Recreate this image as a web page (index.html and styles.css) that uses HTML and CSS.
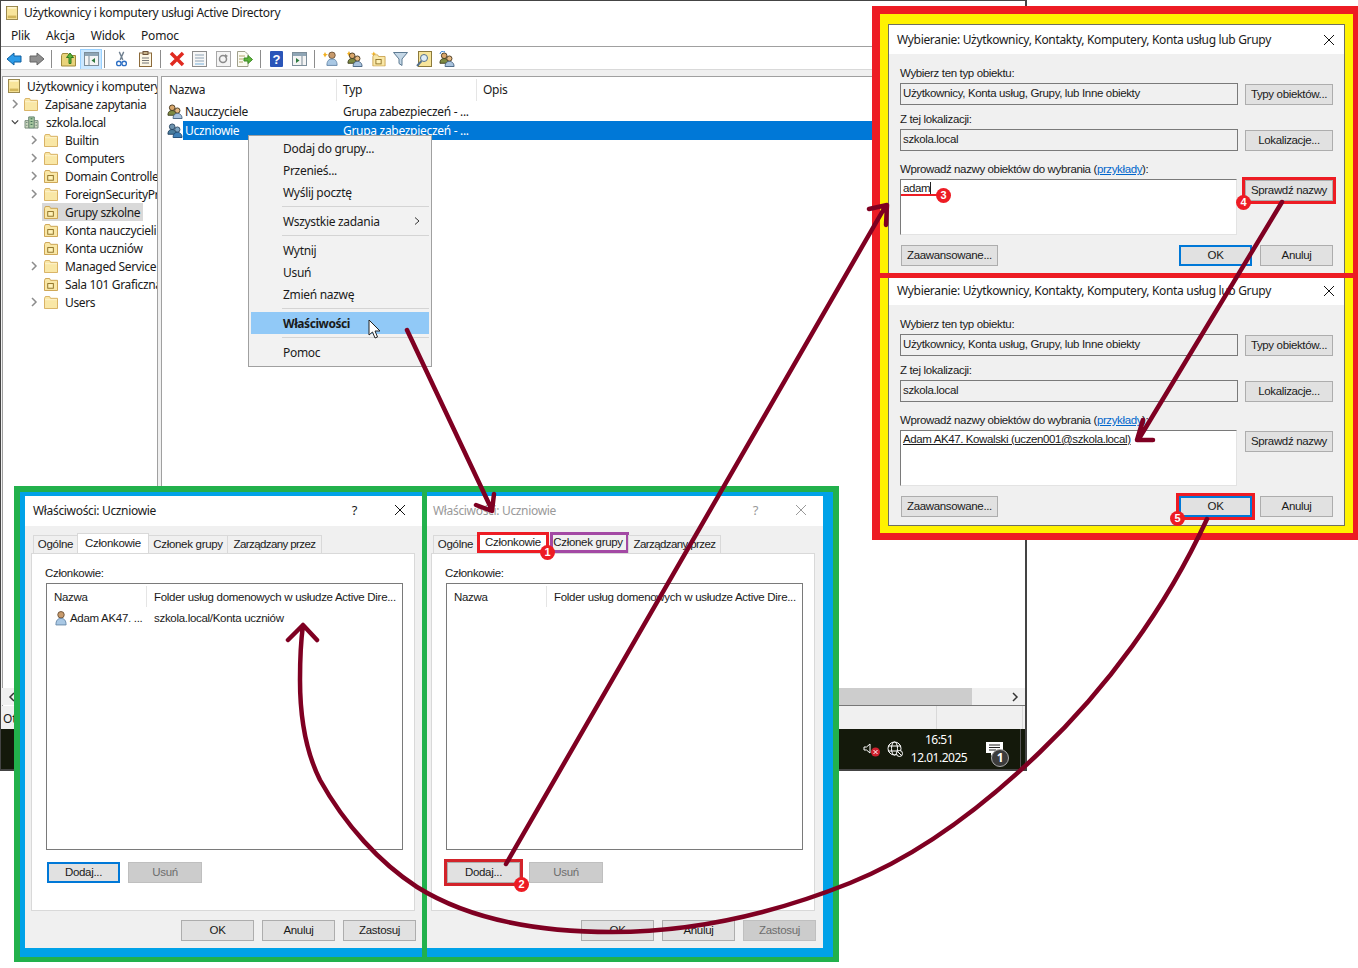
FILE: index.html
```html
<!DOCTYPE html>
<html>
<head>
<meta charset="utf-8">
<title>Użytkownicy i komputery usługi Active Directory</title>
<link rel="stylesheet" href="styles.css">
</head>
<body>
<svg class="defs" width="0" height="0">
	<symbol id="i-folder" viewBox="0 0 15 14">
		<path d="M.5 2.5V13.5H14.5V2.5H7L6 .5H1.5Z" fill="#f9e7a6" stroke="#d6ad5c"/>
		<path d="M1 4H14" stroke="#fdf3cf"/>
	</symbol>
	<symbol id="i-ou" viewBox="0 0 15 14">
		<path d="M.5 2.5V13.5H14.5V2.5H7L6 .5H1.5Z" fill="#f9e7a6" stroke="#c99f4b"/>
		<rect x="4" y="6" width="6" height="5" fill="#fff2b8" stroke="#8a6d22"/>
	</symbol>
	<symbol id="i-root" viewBox="0 0 14 16">
		<rect x=".5" y=".5" width="13" height="15" fill="#f8e59b" stroke="#8c7a3c"/>
		<rect x="2" y="11" width="10" height="3" fill="#d2b65a"/>
		<path d="M2 2H12" stroke="#fff6cf" stroke-width="2"/>
	</symbol>
	<symbol id="i-domain" viewBox="0 0 16 14">
		<path d="M5 1H11V13H5Z" fill="#a8c9a0" stroke="#5f7d6d"/>
		<path d="M1 5H5V13H1ZM11 5H15V13H11Z" fill="#cfd8c2" stroke="#6f8574"/>
		<path d="M7 3H9M7 6H9M7 9H9M2.500 7H3.500M2.500 10H3.500M12.500 7H13.500M12.500 10H13.500" stroke="#2f5f49"/>
	</symbol>
	<symbol id="i-group" viewBox="0 0 17 16">
		<circle cx="5.500" cy="4" r="3" fill="#d9a76c" stroke="#4a3a20"/>
		<path d="M1 12C1 8 3 7 5.500 7S10 8 10 12Z" fill="#7d8a42" stroke="#3f3f1f"/>
		<circle cx="11" cy="7" r="2.800" fill="#e5b982" stroke="#4a3a20"/>
		<path d="M6.500 15.500C6.500 11.500 8.500 10 11 10S16 11.500 16 15.500Z" fill="#a9c3de" stroke="#45617f"/>
	</symbol>
	<symbol id="i-groupsel" viewBox="0 0 17 16">
		<circle cx="5.500" cy="4" r="3" fill="#6d92ad" stroke="#2f4c66"/>
		<path d="M1 12C1 8 3 7 5.500 7S10 8 10 12Z" fill="#4a7d9e" stroke="#1f3f5f"/>
		<circle cx="11" cy="7" r="2.800" fill="#7ea6c4" stroke="#2f4c66"/>
		<path d="M6.500 15.500C6.500 11.500 8.500 10 11 10S16 11.500 16 15.500Z" fill="#3f7fb5" stroke="#1c4a75"/>
	</symbol>
	<symbol id="i-user" viewBox="0 0 13 16">
		<circle cx="6.500" cy="4.500" r="3.500" fill="#c79a6c" stroke="#6d5238"/>
		<path d="M1 15.500C1 10.500 3 8.500 6.500 8.500S12 10.500 12 15.500Z" fill="#a9c8e4" stroke="#6688a8"/>
	</symbol>
	<symbol id="i-chev" viewBox="0 0 8 10">
		<path d="M2 1L6 5L2 9" fill="none" stroke="#8c8c8c" stroke-width="1.500"/>
	</symbol>
	<symbol id="i-open" viewBox="0 0 10 8">
		<path d="M1 2L5 6L9 2" fill="none" stroke="#404040" stroke-width="1.500"/>
	</symbol>
	<symbol id="i-x" viewBox="0 0 12 12">
		<path d="M1 1L11 11M11 1L1 11" fill="none" stroke="currentColor"/>
	</symbol>
</svg>

<div class="console">
	<div class="titlebar">
		<svg class="ico-root" width="12" height="14"><use href="#i-root"/></svg>
		<span>Użytkownicy i komputery usługi Active Directory</span>
	</div>
	<div class="menubar">
		<span>Plik</span><span>Akcja</span><span>Widok</span><span>Pomoc</span>
	</div>
	<div class="toolbar">
		<svg class="tb w16" viewBox="0 0 16 14"><path d="M1 7L8 1V4H15V10H8V13Z" fill="#2c9be8" stroke="#0f5f9f"/></svg>
		<svg class="tb w16 gap7" viewBox="0 0 16 14"><path d="M15 7L8 1V4H1V10H8V13Z" fill="#8f8f8f" stroke="#666"/></svg>
		<i class="sep s1"></i>
		<svg class="tb w15" viewBox="0 0 15 15"><path d="M.5 4V14.500H14.500V4H8L7 2H1.500Z" fill="#e9d37a" stroke="#a08a3c"/><path d="M8 12V6H5.500L9 1.500L12.500 6H10V12Z" fill="#5bb53a" stroke="#2f7a1f"/></svg>
		<span class="tb-on"><svg width="15" height="14" viewBox="0 0 15 14"><rect x=".5" y=".5" width="14" height="13" fill="#f4f4f4" stroke="#7c8d99"/><rect x="1" y="1" width="13" height="3" fill="#8fa5b5"/><path d="M5 4V13" stroke="#7c8d99"/><path d="M11 6V11L7.500 8.500Z" fill="#2f7a3f"/></svg></span>
		<i class="sep s2"></i>
		<svg class="tb w13 gap10" viewBox="0 0 13 18"><path d="M9 1L5 10M4 1L8 10" stroke="#6f7f8f" stroke-width="1.500"/><circle cx="3.500" cy="14" r="2.500" fill="none" stroke="#2d6fc4" stroke-width="1.500"/><circle cx="9.500" cy="14" r="2.500" fill="none" stroke="#2d6fc4" stroke-width="1.500"/></svg>
		<svg class="tb w13 gap11" viewBox="0 0 13 16"><rect x=".5" y="2" width="12" height="13.500" fill="#fdf7e5" stroke="#8c6a3a"/><rect x="4" y=".5" width="5" height="3" fill="#c7b38a" stroke="#6d5238"/><path d="M3 7H10M3 9.500H10M3 12H10" stroke="#777"/></svg>
		<i class="sep s3"></i>
		<svg class="tb w16 gap8" viewBox="0 0 16 16"><path d="M2 2L14 14M14 2L2 14" stroke="#e02a20" stroke-width="3.500"/></svg>
		<svg class="tb w15 gap7" viewBox="0 0 15 16"><rect x=".5" y=".5" width="14" height="15" fill="#f7f7f7" stroke="#8c8c8c"/><path d="M3 4H12M3 7H12M3 10H12" stroke="#8ea3b5"/><rect x="3" y="12" width="9" height="2" fill="#b7d4ea"/></svg>
		<svg class="tb w15 gap9" viewBox="0 0 15 16"><rect x=".5" y=".5" width="14" height="15" fill="#f4f4f4" stroke="#a8a8a8"/><circle cx="7" cy="8" r="3.500" fill="none" stroke="#8a8a8a" stroke-width="1.500"/><path d="M9 3L12 5L9 7Z" fill="#8a8a8a"/></svg>
		<svg class="tb w16 gap6" viewBox="0 0 16 16"><path d="M.5.500H8L11 3.500V15.500H.5Z" fill="#fbfbf2" stroke="#a0a08c"/><path d="M2 5H8M2 8H6M2 11H6" stroke="#b0a36a"/><path d="M7 10V7H11V4.500L15.500 8.500L11 12.500V10Z" fill="#5cb53b" stroke="#3b8a22"/></svg>
		<i class="sep s4"></i>
		<svg class="tb w13 gap9" viewBox="0 0 13 16"><rect width="13" height="16" rx="1" fill="#2a55b8"/><text x="6.500" y="13" class="tb-q">?</text></svg>
		<svg class="tb w15 gap9" viewBox="0 0 15 14"><rect x=".5" y=".5" width="14" height="13" fill="#f4f4f4" stroke="#7c8d99"/><rect x="1" y="1" width="13" height="3" fill="#8fa5b5"/><path d="M10 4V13" stroke="#7c8d99"/><path d="M4 6V11L7.500 8.500Z" fill="#2f7a3f"/></svg>
		<i class="sep s5"></i>
		<svg class="tb w16 gap8" viewBox="0 0 16 16"><path d="M2 1L3 3L5 3.500L3 4.500L2 6.500L1 4.500L0 3.500L1 3Z" fill="#f2b01e"/><use href="#i-user" x="3" width="12" height="15"/></svg>
		<svg class="tb w16 gap8" viewBox="0 0 16 16"><path d="M2 0L3 2L5 2.500L3 3.500L2 5.500L1 3.500L0 2.500L1 2Z" fill="#f2b01e"/><use href="#i-group" x="0" y="1" width="16" height="15"/></svg>
		<svg class="tb w15 gap8" viewBox="0 0 16 16"><path d="M3 0L4 2L6 2.500L4 3.500L3 5.500L2 3.500L0 2.500L2 2Z" fill="#f2b01e"/><use href="#i-ou" x="1" y="3" width="15" height="13"/></svg>
		<svg class="tb w15 gap7" viewBox="0 0 15 15"><path d="M.5 1H14.500L9 7.500V14L6 12V7.500Z" fill="#c4d7e6" stroke="#5d7a92"/></svg>
		<svg class="tb w16 gap8" viewBox="0 0 16 16"><rect x="2.500" y=".5" width="13" height="15" fill="#f7e59b" stroke="#8c7a3c"/><circle cx="8" cy="7" r="3.500" fill="#dfeef8" stroke="#55708a"/><path d="M5.500 10L1 15" stroke="#55708a" stroke-width="2"/></svg>
		<svg class="tb w16 gap7" viewBox="0 0 16 16"><use href="#i-group" x="0" y="1" width="16" height="15"/><path d="M1 3A3 3 0 0 1 6 1" fill="none" stroke="#2c7bd0"/></svg>
	</div>
	<div class="band"></div>

	<div class="panes">
		<div class="tree">
			<div class="node lv0"><svg width="12" height="14"><use href="#i-root"/></svg><span>Użytkownicy i komputery</span></div>
			<div class="node lv1"><svg class="chev" width="8" height="10"><use href="#i-chev"/></svg><svg class="fold" width="14" height="13"><use href="#i-folder"/></svg><span>Zapisane zapytania</span></div>
			<div class="node lv1"><svg class="chev" width="10" height="8"><use href="#i-open"/></svg><svg class="fold" width="15" height="13"><use href="#i-domain"/></svg><span>szkola.local</span></div>
			<div class="node lv2"><svg class="chev" width="8" height="10"><use href="#i-chev"/></svg><svg class="fold" width="14" height="13"><use href="#i-folder"/></svg><span>Builtin</span></div>
			<div class="node lv2"><svg class="chev" width="8" height="10"><use href="#i-chev"/></svg><svg class="fold" width="14" height="13"><use href="#i-folder"/></svg><span>Computers</span></div>
			<div class="node lv2"><svg class="chev" width="8" height="10"><use href="#i-chev"/></svg><svg class="fold" width="14" height="13"><use href="#i-ou"/></svg><span>Domain Controllers</span></div>
			<div class="node lv2"><svg class="chev" width="8" height="10"><use href="#i-chev"/></svg><svg class="fold" width="14" height="13"><use href="#i-folder"/></svg><span>ForeignSecurityPrincipals</span></div>
			<div class="node sel"><div class="sel-box"><svg class="fold" width="14" height="13"><use href="#i-ou"/></svg><span>Grupy szkolne</span></div></div>
			<div class="node noexp"><svg class="fold" width="14" height="13"><use href="#i-ou"/></svg><span>Konta nauczycieli</span></div>
			<div class="node noexp"><svg class="fold" width="14" height="13"><use href="#i-ou"/></svg><span>Konta uczniów</span></div>
			<div class="node lv2"><svg class="chev" width="8" height="10"><use href="#i-chev"/></svg><svg class="fold" width="14" height="13"><use href="#i-folder"/></svg><span>Managed Service Accounts</span></div>
			<div class="node noexp"><svg class="fold" width="14" height="13"><use href="#i-ou"/></svg><span>Sala 101 Graficzna</span></div>
			<div class="node lv2"><svg class="chev" width="8" height="10"><use href="#i-chev"/></svg><svg class="fold" width="14" height="13"><use href="#i-folder"/></svg><span>Users</span></div>
		</div>
		<div class="list">
			<div class="list-head">
				<span class="col-name">Nazwa</span><span class="col-type">Typ</span><span class="col-desc">Opis</span>
			</div>
			<div class="list-row">
				<svg width="16" height="15"><use href="#i-group"/></svg>
				<span class="row-name">Nauczyciele</span><span class="row-type">Grupa zabezpieczeń - ...</span>
			</div>
			<div class="list-row">
				<svg width="16" height="15"><use href="#i-groupsel"/></svg>
				<div class="row-fill"><span class="row-name">Uczniowie</span><span class="row-type">Grupa zabezpieczeń - ...</span></div>
			</div>
			<div class="hscroll">
				<span class="arrow-l"><svg width="8" height="10" viewBox="0 0 8 10"><path d="M6 1L2 5L6 9" fill="none" stroke="#333" stroke-width="1.500"/></svg></span>
				<span class="thumb"></span>
				<span class="arrow-r"><svg width="8" height="10"><path d="M2 1L6 5L2 9" fill="none" stroke="#333" stroke-width="1.500"/></svg></span>
			</div>
		</div>
	</div>

	<div class="status"><span class="st-main">Otwarto</span><span class="st-mid"></span><span class="st-end"></span></div>
	<div class="taskbar">
		<svg width="18" height="16" viewBox="0 0 18 16"><path d="M1 6H3.500L7 3V12L3.500 9H1Z" fill="none" stroke="#fff"/><circle cx="12.500" cy="11" r="4.500" fill="#d0202e"/><path d="M10.500 9L14.500 13M14.500 9L10.500 13" stroke="#fff"/></svg>
		<svg class="tray-globe" width="16" height="16" viewBox="0 0 16 16"><circle cx="7.500" cy="7.500" r="6.500" fill="none" stroke="#fff"/><ellipse cx="7.500" cy="7.500" rx="3" ry="6.500" fill="none" stroke="#fff"/><path d="M1 5H14M1 10H14" stroke="#fff"/><circle cx="12.500" cy="12.500" r="3" fill="#14190b" stroke="#fff"/><path d="M10.500 10.500L14.500 14.500" stroke="#fff"/></svg>
		<div class="clock"><div>16:51</div><div>12.01.2025</div></div>
		<div class="notif">
			<svg width="17" height="14" viewBox="0 0 17 14"><path d="M0 0H17V11H8L5 14V11H0Z" fill="#fff"/><path d="M3 3H14M3 5.500H14M3 8H10" stroke="#222"/></svg>
			<span class="notif-n">1</span>
		</div>
	</div>
</div>

<div class="ctx">
	<div class="ctx-item">Dodaj do grupy...</div>
	<div class="ctx-item">Przenieś...</div>
	<div class="ctx-item">Wyślij pocztę</div>
	<div class="ctx-sep"></div>
	<div class="ctx-item">Wszystkie zadania<svg width="6" height="8" viewBox="0 0 6 8"><path d="M1 .5L5 4L1 7.500" fill="none" stroke="#333"/></svg></div>
	<div class="ctx-sep"></div>
	<div class="ctx-item">Wytnij</div>
	<div class="ctx-item">Usuń</div>
	<div class="ctx-item">Zmień nazwę</div>
	<div class="ctx-sep"></div>
	<div class="ctx-item ctx-on"><b>Właściwości</b><svg class="cursor" width="14" height="21" viewBox="0 0 14 21"><path d="M1 1V16L4.500 13L7 19L9.500 18L7 12H12Z" fill="#fff" stroke="#222"/></svg></div>
	<div class="ctx-sep"></div>
	<div class="ctx-item">Pomoc</div>
</div>

<!-- okna wlasciwosci -->
<div class="frame-green">
	<div class="prop">
		<div class="win-title"><span class="win-name">Właściwości: Uczniowie</span><span class="win-q">?</span><svg class="win-x" width="12" height="12"><use href="#i-x"/></svg></div>
		<div class="prop-body">
			<div class="tabs">
				<span class="tab t1">Ogólne</span><span class="tab t2 on">Członkowie</span><span class="tab t3">Członek grupy</span><span class="tab t4">Zarządzany przez</span>
			</div>
			<div class="panel">
				<div class="panel-label">Członkowie:</div>
				<div class="members">
					<div class="m-head"><span class="m-c1">Nazwa</span><span class="m-c2">Folder usług domenowych w usłudze Active Dire...</span></div>
					<div class="m-row"><svg width="12" height="16"><use href="#i-user"/></svg><span class="m-name">Adam AK47. ...</span><span>szkola.local/Konta uczniów</span></div>
				</div>
				<div class="panel-btns"><span class="btn w73 def">Dodaj...</span><span class="btn w74 off">Usuń</span></div>
			</div>
			<div class="foot"><span class="btn w73">OK</span><span class="btn w73">Anuluj</span><span class="btn w73">Zastosuj</span></div>
		</div>
	</div>
	<div class="prop idle">
		<div class="win-title"><span class="win-name">Właściwości: Uczniowie</span><span class="win-q">?</span><svg class="win-x" width="12" height="12"><use href="#i-x"/></svg></div>
		<div class="prop-body">
			<div class="tabs">
				<span class="tab t1">Ogólne</span><span class="tab t2 on ring-red">Członkowie</span><span class="tab t3 ring-purple">Członek grupy</span><span class="tab t4">Zarządzany przez</span>
			</div>
			<div class="panel">
				<div class="panel-label">Członkowie:</div>
				<div class="members">
					<div class="m-head"><span class="m-c1">Nazwa</span><span class="m-c2">Folder usług domenowych w usłudze Active Dire...</span></div>
				</div>
				<div class="panel-btns wide"><span class="btn w73 out-dodaj">Dodaj...</span><span class="btn w74 off">Usuń</span></div>
			</div>
			<div class="foot"><span class="btn w73">OK</span><span class="btn w73">Anuluj</span><span class="btn w73 off">Zastosuj</span></div>
		</div>
	</div>
	<div class="green-div"></div>
</div>

<!-- okna wyboru -->
<div class="frame-red">
	<div class="pick">
		<div class="win-title"><span class="win-name">Wybieranie: Użytkownicy, Kontakty, Komputery, Konta usług lub Grupy</span><svg class="win-x" width="12" height="12"><use href="#i-x"/></svg></div>
		<div class="pick-body">
			<div class="lbl">Wybierz ten typ obiektu:</div>
			<div class="pick-row"><div class="field">Użytkownicy, Konta usług, Grupy, lub Inne obiekty</div><span class="btn w88">Typy obiektów...</span></div>
			<div class="lbl">Z tej lokalizacji:</div>
			<div class="pick-row"><div class="field">szkola.local</div><span class="btn w88">Lokalizacje...</span></div>
			<div class="lbl lbl3">Wprowadź nazwy obiektów do wybrania (<a class="lnk">przykłady</a>):</div>
			<div class="pick-row"><div class="area"><span class="typed">adam</span></div><span class="btn w88 out-red">Sprawdź nazwy</span></div>
			<div class="pick-foot"><span class="btn w97">Zaawansowane...</span><span class="btn w73 def push">OK</span><span class="btn w73">Anuluj</span></div>
		</div>
	</div>
	<div class="pick">
		<div class="win-title"><span class="win-name">Wybieranie: Użytkownicy, Kontakty, Komputery, Konta usług lub Grupy</span><svg class="win-x" width="12" height="12"><use href="#i-x"/></svg></div>
		<div class="pick-body">
			<div class="lbl">Wybierz ten typ obiektu:</div>
			<div class="pick-row"><div class="field">Użytkownicy, Konta usług, Grupy, lub Inne obiekty</div><span class="btn w88">Typy obiektów...</span></div>
			<div class="lbl">Z tej lokalizacji:</div>
			<div class="pick-row"><div class="field">szkola.local</div><span class="btn w88">Lokalizacje...</span></div>
			<div class="lbl lbl3">Wprowadź nazwy obiektów do wybrania (<a class="lnk">przykłady</a>):</div>
			<div class="pick-row"><div class="area"><u>Adam AK47. Kowalski (uczen001@szkola.local)</u></div><span class="btn w88">Sprawdź nazwy</span></div>
			<div class="pick-foot"><span class="btn w97">Zaawansowane...</span><span class="btn w73 def push out-red">OK</span><span class="btn w73">Anuluj</span></div>
		</div>
	</div>
	<div class="red-div"></div>
</div>

<svg class="arrows" width="1358" height="968" viewBox="0 0 1358 968">
	<g fill="none" stroke="#7f0022" stroke-width="4.500" stroke-linecap="round" stroke-linejoin="round">
		<path d="M407 330L491 508M476 505L492 511L494 494"/>
		<path d="M506 864L885 207M869 209L887 205L886 225"/>
		<path d="M1282 202L1140 437M1153 440H1137L1143 420"/>
		<path d="M1207 519C1165 610 1105 690 1040 752C985 805 920 855 850 883C770 915 690 932 612 932C540 932 470 920 417 887C380 863 345 825 320 780C305 750 300 715 300 680C300 660 301 640 303 625M288 640L303 625L317 640"/>
	</g>
	<path class="adam-line" d="M901 195H940" stroke="#ed1c24" stroke-width="2"/>
</svg>

<span class="badge b1">1</span>
<span class="badge b2">2</span>
<span class="badge b3">3</span>
<span class="badge b4">4</span>
<span class="badge b5">5</span>
</body>
</html>
```
FILE: styles.css
```css
html, body{
	margin: 0;
	padding: 0;
	background: #fff;
}
body{
	position: relative;
	width: 1358px;
	height: 968px;
	overflow: hidden;
	font-family: "Noto Sans", sans-serif;
	font-size: 12px;
	color: #1a1a1a;
}
svg{
	display: block;
	flex: none;
}
.defs{
	position: absolute;
}

/* konsola */
.console{
	position: absolute;
	left: 0;
	top: 0;
	width: 1024px;
	height: 768px;
	display: flex;
	flex-direction: column;
	background: #f0f0f0;
	border: 1px solid #444;
	border-width: 1px 2px 2px 1px;
}
.titlebar{
	height: 23px;
	background: #fff;
	display: flex;
	align-items: center;
	gap: 6px;
	padding-left: 5px;
	letter-spacing: -.3px;
}
.menubar{
	height: 22px;
	background: #fff;
	display: flex;
	align-items: center;
	gap: 16px;
	padding-left: 10px;
	border-bottom: 1px solid #a0a0a0;
	letter-spacing: -.2px;
}
.toolbar{
	height: 22px;
	background: #fff;
	display: flex;
	align-items: center;
	padding: 2px 0 0 5px;
	box-sizing: border-box;
}
.tb{
	height: 16px;
}
.w16{ width: 16px; }
.w15{ width: 15px; }
.w13{ width: 13px; }
.gap6{ margin-left: 6px; }
.gap7{ margin-left: 7px; }
.gap8{ margin-left: 8px; }
.gap9{ margin-left: 9px; }
.gap10{ margin-left: 10px; }
.gap11{ margin-left: 11px; }
.tb-q{
	font: bold 13px "Liberation Sans", sans-serif;
	fill: #fff;
	text-anchor: middle;
}
.sep{
	display: block;
	width: 1px;
	height: 18px;
	background: #8c8c8c;
	margin-left: 5px;
}
.sep.s1{ margin: 0 9px 0 6px; }
.sep.s2{ margin: 0; }
.sep.s3{ margin-left: 8px; }
.sep.s4{ margin-left: 7px; }
.sep.s5{ margin-left: 7px; }
.tb-on{
	display: flex;
	align-items: center;
	justify-content: center;
	width: 22px;
	height: 21px;
	margin-left: 4px;
	margin-right: 2px;
	background: #cce8ff;
	border: 1px solid #99d1ff;
	box-sizing: border-box;
}
.band{
	height: 7px;
	border-top: 1px solid #d9d9d9;
	box-sizing: border-box;
}
.panes{
	display: flex;
	gap: 3px;
	height: 630px;
	padding-left: 1px;
}
.tree{
	width: 156px;
	height: 630px;
	background: #fff;
	border: 1px solid #a0a0a0;
	border-width: 1px 1px 0 1px;
	box-sizing: border-box;
	overflow: hidden;
}
.node{
	display: flex;
	align-items: center;
	height: 18px;
	white-space: nowrap;
	letter-spacing: -.35px;
}
.node.lv0{
	padding-left: 5px;
	gap: 7px;
}
.node.lv1{
	padding-left: 8px;
}
.node.lv2{
	padding-left: 27px;
}
.node .chev{
	width: 8px;
	margin-right: 5px;
}
.node.lv2 .chev{
	margin-right: 6px;
}
.node .fold{
	margin-right: 7px;
}
.node.noexp{
	padding-left: 41px;
}
.node.sel{
	padding-left: 39px;
}
.sel-box{
	display: flex;
	align-items: center;
	height: 18px;
	padding: 0 3px 0 2px;
	background: #d9d9d9;
}
.list{
	position: relative;
	flex: 1;
	background: #fff;
	border-top: 1px solid #a0a0a0;
	border-left: 1px solid #a0a0a0;
	border-bottom: 1px solid #777;
	letter-spacing: -.3px;
}
.list-head{
	display: flex;
	height: 25px;
	align-items: center;
}
.list-head span{
	height: 22px;
	line-height: 22px;
	box-sizing: border-box;
	border-right: 1px solid #e5e5e5;
}
.col-name{
	width: 175px;
	padding-left: 7px;
}
.col-type{
	width: 140px;
	padding-left: 6px;
}
.col-desc{
	flex: 1;
	padding-left: 6px;
	border: 0 !important;
}
.list-row{
	display: flex;
	align-items: center;
	height: 19px;
	padding-left: 5px;
	white-space: nowrap;
}
.row-name{
	display: block;
	width: 160px;
	padding-left: 2px;
	box-sizing: border-box;
}
.row-fill{
	display: flex;
	align-items: center;
	flex: 1;
	height: 19px;
	background: #0078d7;
	color: #fff;
}
.hscroll{
	position: absolute;
	left: -161px;
	right: 0;
	bottom: 0;
	height: 17px;
	background: #f0f0f0;
	display: flex;
	align-items: center;
	justify-content: space-between;
}
.thumb{
	position: absolute;
	left: 20px;
	width: 951px;
	top: 0;
	bottom: 0;
	background: #cdcdcd;
}
.arrow-l{
	margin-left: 7px;
	position: relative;
}
.arrow-r{
	margin-right: 6px;
}
.status{
	display: flex;
	height: 23px;
	align-items: center;
	background: #f0f0f0;
}
.status span{
	height: 100%;
	line-height: 25px;
	box-sizing: border-box;
	border-right: 1px solid #d9d9d9;
}
.st-main{
	width: 936px;
	padding-left: 2px;
}
.st-mid{
	width: 86px;
}
.st-end{
	border: 0 !important;
}
.taskbar{
	height: 40px;
	flex: none;
	background: #14190b;
	color: #fff;
	display: flex;
	align-items: center;
	justify-content: flex-end;
	padding-right: 22px;
	letter-spacing: -.3px;
	box-shadow: inset -4px 0 0 #14190b, inset -5px 0 0 #555;
}
.tray-globe{
	margin-left: 6px;
}
.clock{
	width: 72px;
	text-align: center;
	line-height: 18px;
	letter-spacing: -.5px;
}
.notif{
	position: relative;
	margin-left: 11px;
}
.notif-n{
	position: absolute;
	left: 5px;
	top: 7px;
	width: 16px;
	height: 16px;
	line-height: 16px;
	border-radius: 50%;
	background: #3c3c3c;
	border: 1px solid #aaa;
	text-align: center;
	font-weight: bold;
	box-sizing: content-box;
}

/* menu kontekstowe */
.ctx{
	position: absolute;
	left: 248px;
	top: 135px;
	width: 178px;
	height: 226px;
	padding: 1px 2px 3px 2px;
	background: #f2f2f2;
	border: 1px solid #a0a0a0;
	letter-spacing: -.3px;
}
.ctx-item{
	position: relative;
	display: flex;
	align-items: center;
	justify-content: space-between;
	height: 22px;
	padding: 0 9px 0 32px;
}
.ctx-item b{
	font-weight: bold;
	letter-spacing: -.45px;
}
.ctx-sep{
	height: 1px;
	margin: 3px 0 3px 31px;
	background: #d4d4d4;
}
.ctx-on{
	background: #91c9f7;
}
.cursor{
	position: absolute;
	left: 117px;
	top: 7px;
}

/* ramki */
.frame-green{
	position: absolute;
	left: 14px;
	top: 486px;
	width: 825px;
	height: 476px;
	box-sizing: border-box;
	display: flex;
	padding: 4px 10px 9px 5px;
	gap: 3px;
	background: #00a2e8;
	border: 6px solid #22b14c;
	border-bottom-width: 5px;
	font-family: "Liberation Sans", sans-serif;
	font-size: 11.5px;
	letter-spacing: -.3px;
}
.green-div{
	position: absolute;
	left: 402px;
	top: 0;
	bottom: 0;
	width: 5px;
	background: #22b14c;
}
.frame-red{
	position: absolute;
	left: 872px;
	top: 6px;
	width: 486px;
	height: 534px;
	box-sizing: border-box;
	padding: 10px 8px 7px 8px;
	background: #fff200;
	border: 8px solid #ed1c24;
	border-width: 8px 5px 7px 8px;
	font-family: "Liberation Sans", sans-serif;
	font-size: 11.5px;
	letter-spacing: -.35px;
}
.red-div{
	position: absolute;
	left: 0;
	right: 0;
	top: 259px;
	height: 5px;
	background: #ed1c24;
}

/* okna */
.win-title{
	display: flex;
	align-items: center;
	height: 30px;
	background: #fff;
	font-family: "Noto Sans", sans-serif;
	font-size: 12px;
	letter-spacing: -.33px;
	flex: none;
}
.win-name{
	flex: 1;
}
.win-q{
	font-size: 13px;
	margin-right: 37px;
}
.win-x{
	color: #111;
}
.prop{
	width: 397px;
	background: #f0f0f0;
	display: flex;
	flex-direction: column;
}
.prop + .prop{
	width: 398px;
}
.prop .win-title{
	padding: 0 16px 2px 8px;
	box-sizing: border-box;
}
.prop.idle .win-title{
	color: #999;
}
.prop.idle .win-x{
	color: #999;
}
.prop-body{
	flex: 1;
	padding: 7px 6px;
	display: flex;
	flex-direction: column;
}
.prop + .prop .prop-body{
	padding-right: 7px;
}
.tabs{
	display: flex;
	align-items: flex-end;
	height: 20px;
	padding-left: 3px;
}
.tab{
	height: 18px;
	line-height: 17px;
	text-align: center;
	box-sizing: border-box;
	background: #f0f0f0;
	border: 1px solid #d9d9d9;
	border-bottom: 0;
	margin-left: -1px;
	white-space: nowrap;
}
.t1{ width: 45px; }
.t2{ width: 72px; }
.t3{ width: 80px; }
.t4{ width: 95px; letter-spacing: -.6px; }
.tab.on{
	height: 21px;
	background: #fff;
	position: relative;
	margin-bottom: -1px;
	line-height: 19px;
}
.ring-red{
	border: 3px solid #ed1c24;
	line-height: 14px !important;
	height: 21px;
	margin-bottom: 0 !important;
}
.ring-purple{
	border: 3px solid #a349a4;
	line-height: 15px;
	height: 21px;
	width: 79px;
	margin-left: 1px;
	padding-right: 3px;
}
.ring-purple + .t4{
	width: 93px;
}
.panel{
	flex: none;
	width: 384px;
	height: 358px;
	box-sizing: border-box;
	background: #fff;
	border: 1px solid #d9d9d9;
	padding: 13px 11px 0 13px;
	position: relative;
}
.panel-label{
	height: 16px;
	line-height: 13px;
}
.members{
	height: 267px;
	box-sizing: border-box;
	border: 1px solid #7a7a7a;
	width: 357px;
	margin-left: 1px;
}
.m-head{
	display: flex;
	height: 25px;
	align-items: center;
}
.m-c1{
	width: 100px;
	height: 21px;
	line-height: 22px;
	padding-left: 7px;
	box-sizing: border-box;
	border-right: 1px solid #e5e5e5;
}
.m-c2{
	padding-left: 7px;
	white-space: nowrap;
}
.m-row{
	display: flex;
	align-items: center;
	height: 17px;
	padding-left: 8px;
	white-space: nowrap;
}
.m-name{
	width: 84px;
	padding-left: 3px;
}
.panel-btns{
	display: flex;
	gap: 8px;
	margin-top: 12px;
	margin-left: 2px;
}
.panel-btns.wide{
	gap: 9px;
}
.foot{
	display: flex;
	justify-content: flex-end;
	gap: 8px;
	margin-top: 9px;
}
.btn{
	display: block;
	height: 21px;
	line-height: 19px;
	box-sizing: border-box;
	text-align: center;
	background: #e1e1e1;
	border: 1px solid #adadad;
	white-space: nowrap;
	flex: none;
}
.btn.w73{ width: 73px; }
.btn.w74{ width: 74px; }
.btn.w88{ width: 88px; }
.btn.w97{ width: 97px; }
.btn.off{
	background: #cccccc;
	border-color: #bfbfbf;
	color: #6d6d6d;
}
.btn.def{
	border: 2px solid #0078d7;
	line-height: 17px;
}
.out-dodaj{
	outline: 3px solid #d2232a;
	outline-offset: 0;
}
.out-red{
	outline: 3px solid #ed1c24;
	outline-offset: 0;
}
.pick{
	width: 455px;
	height: 249px;
	background: #f0f0f0;
	border: 1px solid #6f7060;
	display: flex;
	flex-direction: column;
}
.pick .win-title{
	padding: 0 9px 0 8px;
	height: 29px;
}
.pick-body{
	padding: 12px 11px 0 11px;
}
.lbl{
	height: 14px;
	line-height: 14px;
	margin-bottom: 3px;
	white-space: nowrap;
}
.pick-row{
	display: flex;
	justify-content: space-between;
	margin-bottom: 7px;
}
.pick-row .btn{
	margin-top: 1px;
}
.field{
	width: 338px;
	height: 22px;
	box-sizing: border-box;
	border: 1px solid #7a7a7a;
	padding-left: 2px;
	line-height: 18px;
}
.lbl3{
	margin-top: 11px;
	margin-bottom: 3px;
	letter-spacing: -.38px;
}
.area{
	width: 337px;
	height: 56px;
	box-sizing: border-box;
	background: #fff;
	border: 1px solid #7a7a7a;
	border-color: #7a7a7a #e3e3e3 #e3e3e3 #7a7a7a;
	padding-left: 2px;
	line-height: 17px;
	letter-spacing: -.39px;
}
.typed{
	border-right: 1px solid #222;
}
.lnk{
	color: #0066cc;
	text-decoration: underline;
}
.pick-foot{
	display: flex;
	gap: 8px;
	margin-top: 10px;
	padding-left: 1px;
}
.push{
	margin-left: auto;
}

/* strzalki i numerki */
.arrows{
	position: absolute;
	left: 0;
	top: 0;
}
.badge{
	position: absolute;
	width: 15px;
	height: 15px;
	border-radius: 50%;
	background: #ed1c24;
	color: #fff;
	text-align: center;
	font: bold 11px/15px "Liberation Sans", sans-serif;
}
.b1{ left: 540px; top: 545px; }
.b2{ left: 514px; top: 877px; }
.b3{ left: 936px; top: 188px; }
.b4{ left: 1236px; top: 195px; }
.b5{ left: 1170px; top: 511px; }
```
